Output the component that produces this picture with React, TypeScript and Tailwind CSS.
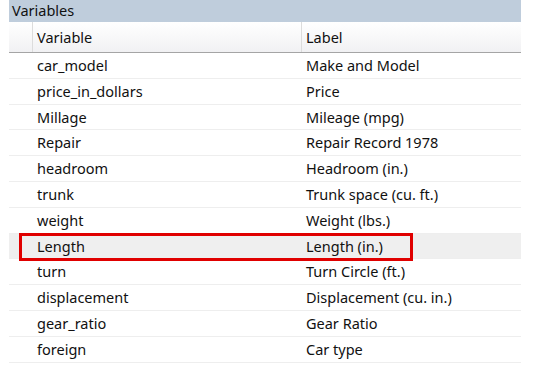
const rows: [string, string][] = [
  ["car_model", "Make and Model"],
  ["price_in_dollars", "Price"],
  ["Millage", "Mileage (mpg)"],
  ["Repair", "Repair Record 1978"],
  ["headroom", "Headroom (in.)"],
  ["trunk", "Trunk space (cu. ft.)"],
  ["weight", "Weight (lbs.)"],
  ["Length", "Length (in.)"],
  ["turn", "Turn Circle (ft.)"],
  ["displacement", "Displacement (cu. in.)"],
  ["gear_ratio", "Gear Ratio"],
  ["foreign", "Car type"],
];

export default function App() {
  return (
    <div className="w-[535px] h-[376px] bg-white overflow-hidden text-[14.5px] text-[#111] font-['Noto_Sans',sans-serif]">
      <div className="ml-[9px] w-[512px]">
        <div className="h-[22px] bg-[#bfcddc] pl-[3px] leading-[21px]">Variables</div>
        <div className="flex h-[31px] bg-gradient-to-b from-white to-[#f1f1f3] border-b border-[#a5a5a5]">
          <div className="w-[24px] border-r border-[#dcdcdc]" />
          <div className="w-[269px] border-r border-[#dcdcdc] pl-[4px] leading-[30px]">Variable</div>
          <div className="flex-1 pl-[4px] leading-[30px]">Label</div>
        </div>
        {rows.map(([v, l]) => (
          <div
            key={v}
            className={`relative flex h-[25.8px] border-b border-[#eeeeee] leading-[24px] ${v === "Length" ? "bg-[#efefef]" : ""}`}
          >
            <div className="w-[28px]" />
            <div className="w-[269px]">{v}</div>
            <div className="flex-1">{l}</div>
            {v === "Length" && (
              <div className="absolute left-[10px] top-[-1px] w-[394px] h-[28px] border-[3px] border-[#e00000]" />
            )}
          </div>
        ))}
      </div>
    </div>
  );
}
